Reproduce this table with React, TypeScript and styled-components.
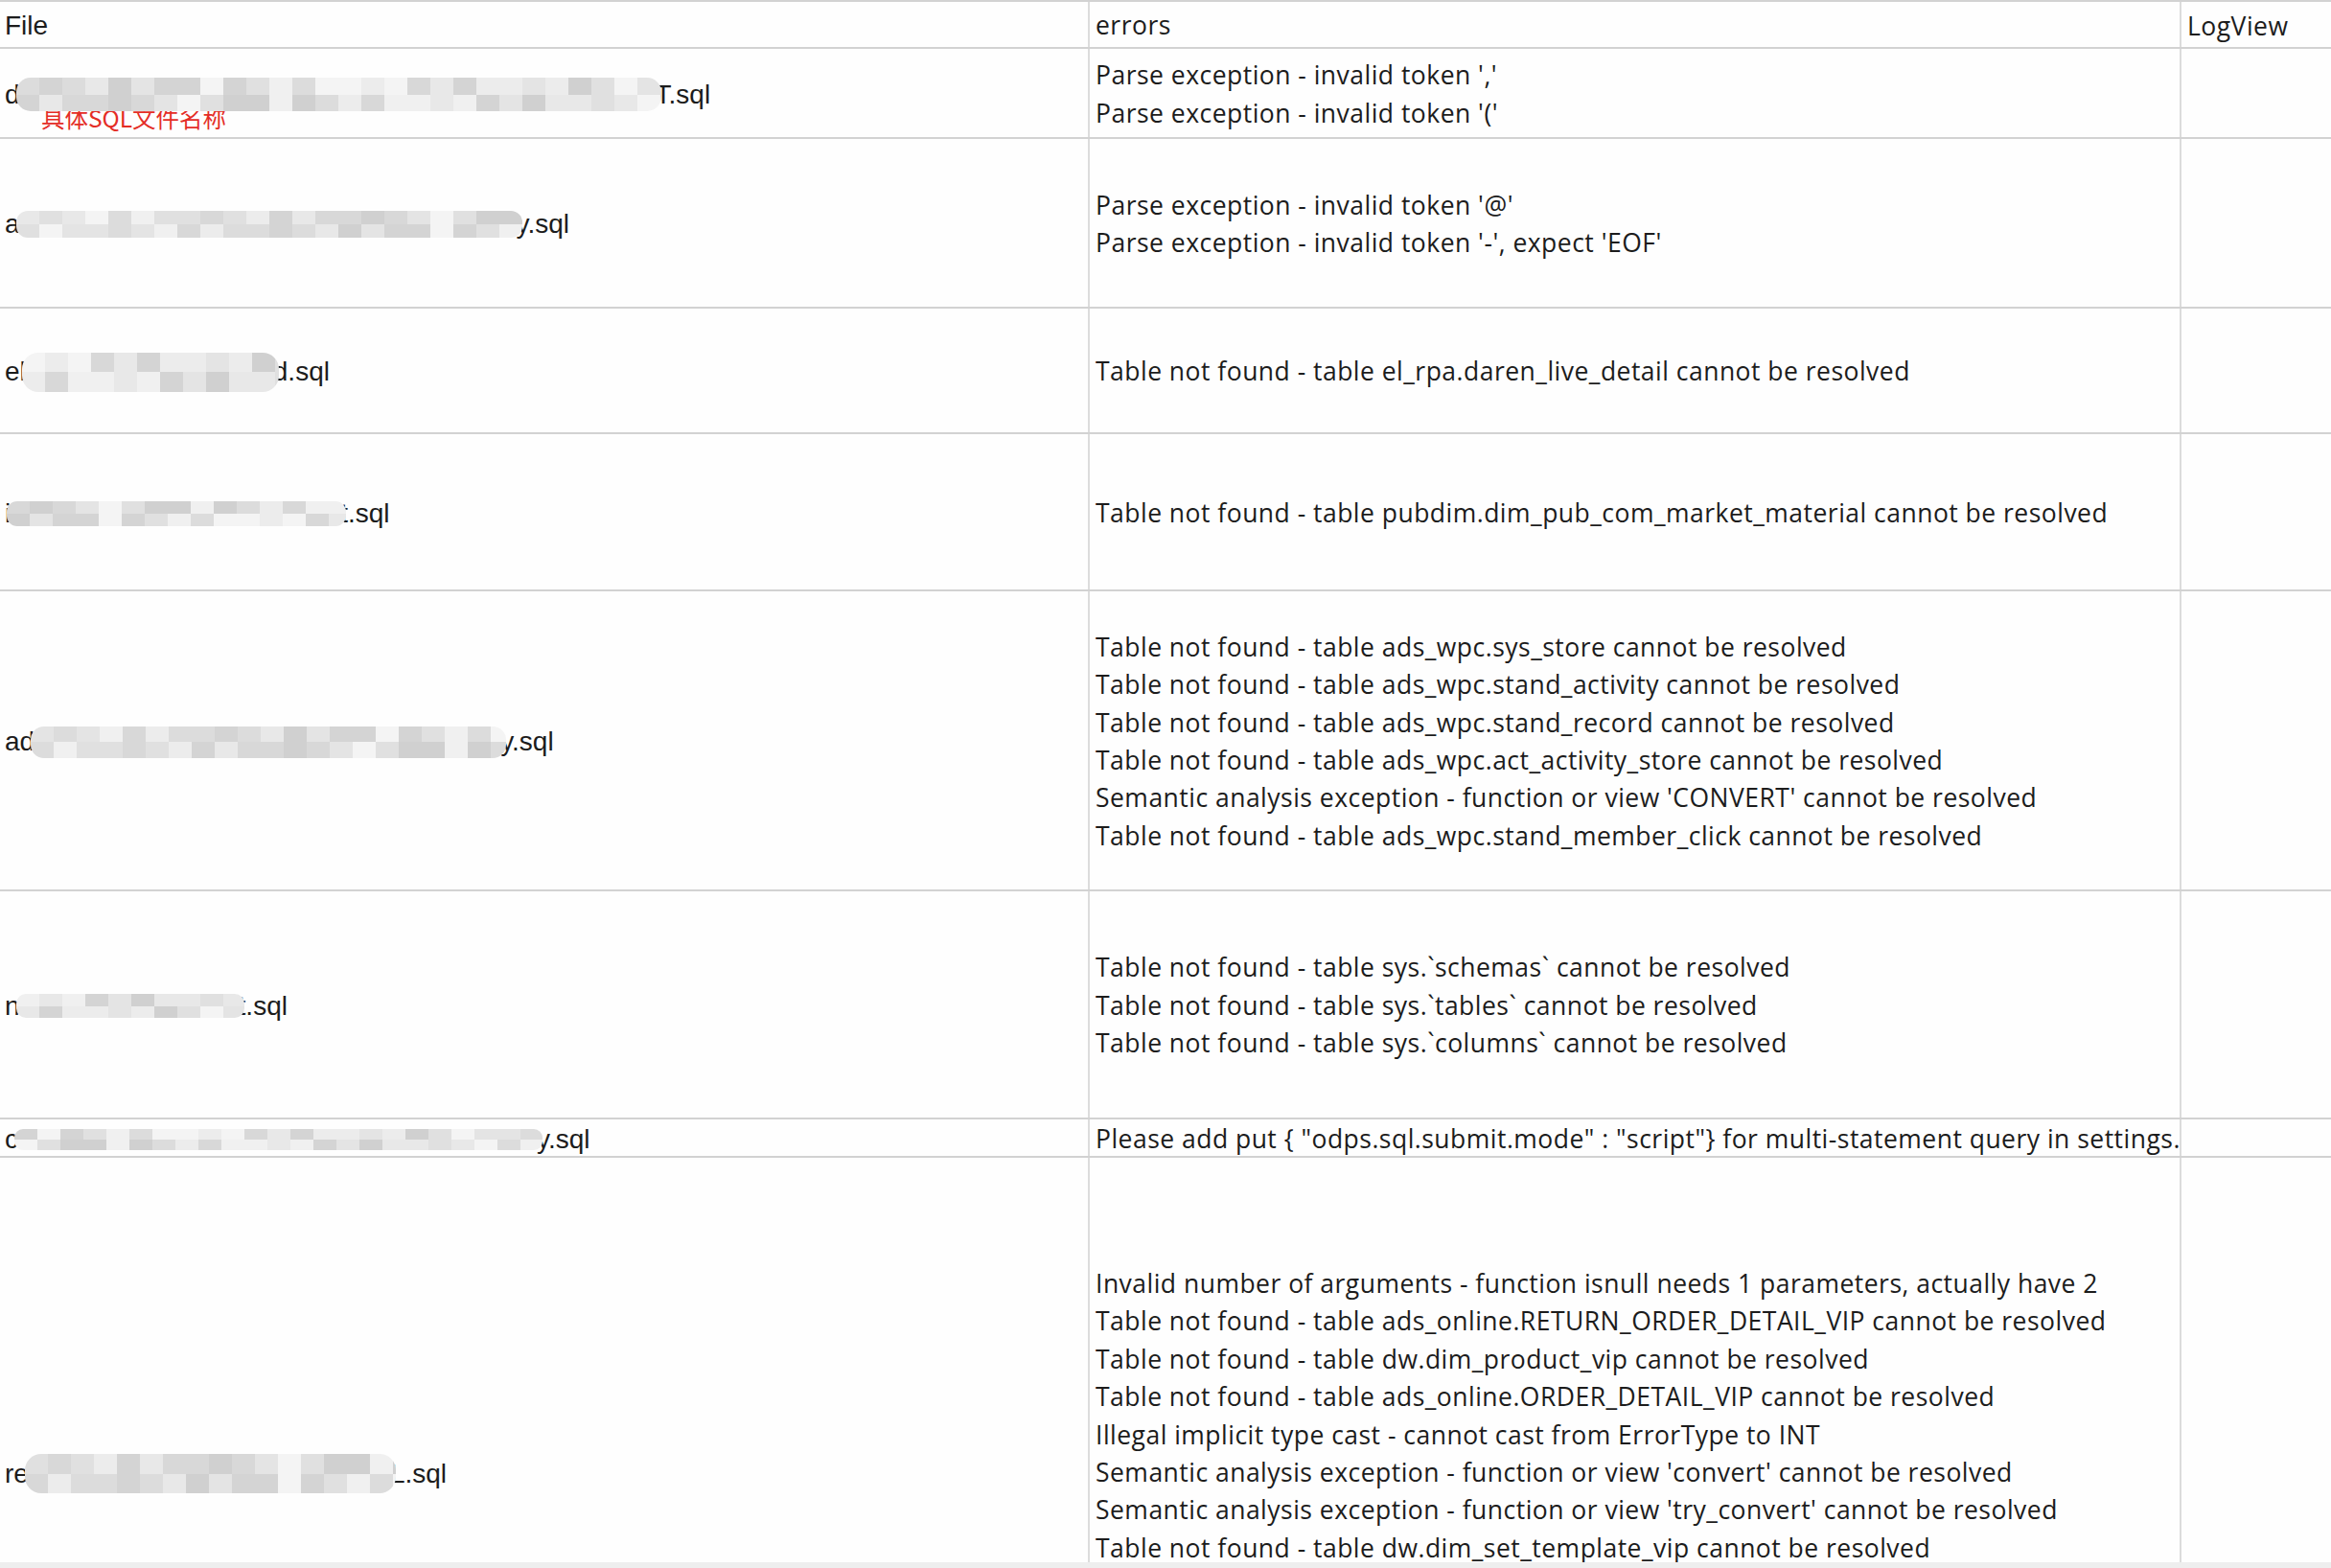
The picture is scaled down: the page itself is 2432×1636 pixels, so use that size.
import styled, { createGlobalStyle, css } from "styled-components";

const GlobalStyle = createGlobalStyle`
  body {
    margin: 0;
    background: #ffffff;
  }
`;

const Sheet = styled.div`
  position: relative;
  width: 2432px;
  height: 1636px;
  overflow: hidden;
  background: #fefefe;
  border-top: 2px solid #d2d2d2;
  box-sizing: border-box;
  color: #1c1c1c;
`;

const Row = styled.div<{ $h: number }>`
  display: grid;
  grid-template-columns: 1137px 1139px 1fr;
  height: ${(p) => p.$h}px;
  border-bottom: 2px solid #d2d2d2;
  box-sizing: border-box;
`;

const Cell = styled.div`
  position: relative;
  display: flex;
  flex-direction: column;
  justify-content: center;
  min-width: 0;
  padding: 3px 0 0 5px;
  border-right: 2px solid #dcdcdc;
  box-sizing: border-box;
  white-space: nowrap;
  overflow: hidden;
`;

const FileCell = styled(Cell)`
  font-family: "Liberation Sans", Arial, sans-serif;
  font-size: 28px;
`;

const ErrorCell = styled(Cell)<{ $top?: number }>`
  padding-left: 6px;
  font-family: "Open Sans", "Noto Sans", sans-serif;
  font-size: 26.5px;
  letter-spacing: 0.48px;
  line-height: 39.4px;
  ${(p) =>
    p.$top !== undefined &&
    css`
      justify-content: flex-start;
      padding-top: ${p.$top}px;
    `}
`;

const LogCell = styled(Cell)`
  border-right: none;
  padding-left: 6px;
  font-family: "Open Sans", "Noto Sans", sans-serif;
  font-size: 26.5px;
  letter-spacing: 0.48px;
`;

const HeadFile = styled(FileCell)`
  font-size: 28px;
`;

const Name = styled.div`
  display: flex;
  align-items: center;
  line-height: 34px;
`;

const Mosaic = styled.span<{ $w: number; $h: number }>`
  position: relative;
  z-index: 1;
  display: inline-grid;
  grid-auto-flow: column;
  grid-template-rows: 1fr 1fr;
  grid-auto-columns: 24px;
  flex: none;
  width: ${(p) => p.$w}px;
  height: ${(p) => p.$h}px;
  margin: 0 -6px 0 -4px;
  border-radius: ${(p) => Math.round(p.$h / 2.4)}px;
  overflow: hidden;
  filter: blur(0.7px);
`;

const Note = styled.span`
  position: absolute;
  left: 43px;
  top: 60px;
  font-family: "Noto Sans CJK SC", sans-serif;
  font-size: 24.5px;
  line-height: 1;
  color: #e42d26;
`;

const Edge = styled.div`
  position: absolute;
  left: 0;
  right: 0;
  bottom: 0;
  height: 6px;
  background: #eeeeee;
`;

type Entry = {
  h: number;
  prefix: string;
  suffix: string;
  w: number;
  bh: number;
  errors: string[];
  top?: number;
  note?: string;
};

const rows: Entry[] = [
  {
    h: 94,
    prefix: "d",
    suffix: "T.sql",
    w: 673,
    bh: 35,
    note: "具体SQL文件名称",
    errors: ["Parse exception - invalid token ','", "Parse exception - invalid token '('"],
  },
  {
    h: 177,
    prefix: "a",
    suffix: "y.sql",
    w: 528,
    bh: 28,
    errors: [
      "Parse exception - invalid token '@'",
      "Parse exception - invalid token '-', expect 'EOF'",
    ],
  },
  {
    h: 131,
    prefix: "el",
    suffix: "d.sql",
    w: 268,
    bh: 41,
    errors: ["Table not found - table el_rpa.daren_live_detail cannot be resolved"],
  },
  {
    h: 164,
    prefix: "i",
    suffix: "t.sql",
    w: 354,
    bh: 26,
    errors: ["Table not found - table pubdim.dim_pub_com_market_material cannot be resolved"],
  },
  {
    h: 313,
    prefix: "ad",
    suffix: "y.sql",
    w: 496,
    bh: 33,
    errors: [
      "Table not found - table ads_wpc.sys_store cannot be resolved",
      "Table not found - table ads_wpc.stand_activity cannot be resolved",
      "Table not found - table ads_wpc.stand_record cannot be resolved",
      "Table not found - table ads_wpc.act_activity_store cannot be resolved",
      "Semantic analysis exception - function or view 'CONVERT' cannot be resolved",
      "Table not found - table ads_wpc.stand_member_click cannot be resolved",
    ],
  },
  {
    h: 238,
    prefix: "n",
    suffix: "t.sql",
    w: 238,
    bh: 25,
    errors: [
      "Table not found - table sys.`schemas` cannot be resolved",
      "Table not found - table sys.`tables` cannot be resolved",
      "Table not found - table sys.`columns` cannot be resolved",
    ],
  },
  {
    h: 40,
    prefix: "c",
    suffix: "y.sql",
    w: 551,
    bh: 22,
    errors: [
      'Please add put { "odps.sql.submit.mode" : "script"} for multi-statement query in settings.',
    ],
  },
  {
    h: 658,
    prefix: "re",
    suffix: "L.sql",
    w: 387,
    bh: 41,
    top: 112,
    errors: [
      "Invalid number of arguments - function isnull needs 1 parameters, actually have 2",
      "Table not found - table ads_online.RETURN_ORDER_DETAIL_VIP cannot be resolved",
      "Table not found - table dw.dim_product_vip cannot be resolved",
      "Table not found - table ads_online.ORDER_DETAIL_VIP cannot be resolved",
      "Illegal implicit type cast - cannot cast from ErrorType to INT",
      "Semantic analysis exception - function or view 'convert' cannot be resolved",
      "Semantic analysis exception - function or view 'try_convert' cannot be resolved",
      "Table not found - table dw.dim_set_template_vip cannot be resolved",
    ],
  },
];

function shade(i: number, seed: number) {
  const v = 208 + ((i * 37 + seed * 53 + ((i * i) % 7) * 11) % 10) * 4;
  return `rgb(${v}, ${v}, ${v})`;
}

function Blur({ w, h, seed }: { w: number; h: number; seed: number }) {
  const count = Math.ceil(w / 24) * 2;
  return (
    <Mosaic $w={w} $h={h}>
      {Array.from({ length: count }, (_, i) => (
        <span key={i} style={{ background: shade(i, seed) }} />
      ))}
    </Mosaic>
  );
}

function App() {
  return (
    <>
      <GlobalStyle />
      <Sheet>
        <Row $h={49}>
          <HeadFile>File</HeadFile>
          <ErrorCell>errors</ErrorCell>
          <LogCell>LogView</LogCell>
        </Row>
        {rows.map((r, idx) => (
          <Row $h={r.h} key={idx}>
            <FileCell>
              <Name>
                <span>{r.prefix}</span>
                <Blur w={r.w} h={r.bh} seed={idx + 1} />
                <span>{r.suffix}</span>
              </Name>
              {r.note && <Note>{r.note}</Note>}
            </FileCell>
            <ErrorCell $top={r.top}>
              {r.errors.map((e) => (
                <div key={e}>{e}</div>
              ))}
            </ErrorCell>
            <LogCell />
          </Row>
        ))}
        <Edge />
      </Sheet>
    </>
  );
}

export default App;
